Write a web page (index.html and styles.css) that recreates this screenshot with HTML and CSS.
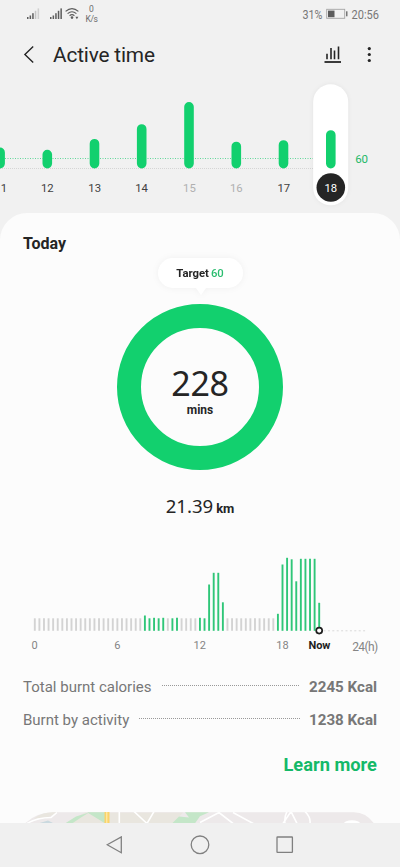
FILE: index.html
```html
<!DOCTYPE html>
<html lang="en">
<head>
<meta charset="utf-8">
<meta name="viewport" content="width=device-width, initial-scale=1">
<title>Active time</title>
<link rel="stylesheet" href="styles.css">
</head>
<body>
<div class="phone">
  <div class="status">
    <svg width="400" height="30" viewBox="0 0 400 30">
      <g fill="#5c5c5c">
        <rect x="27" y="17" width="1.5" height="2"/><rect x="29.6" y="15.5" width="1.5" height="3.5"/><rect x="32.2" y="13.2" width="1.5" height="5.8"/>
        <rect x="34.8" y="10.8" width="1.5" height="8.2" fill="#c4c4c4"/><rect x="37.6" y="8.4" width="1.5" height="10.6" fill="#d0d0d0"/>
        <rect x="50" y="17" width="1.5" height="2"/><rect x="52.6" y="15.5" width="1.5" height="3.5"/><rect x="55.2" y="13.2" width="1.5" height="5.8"/>
        <rect x="57.8" y="10.8" width="1.5" height="8.2"/><rect x="60.4" y="8.4" width="1.5" height="10.6"/>
        <circle cx="72" cy="17.6" r="1.3"/>
        <path d="M75.4 16.8h3l-1.5 2.4z"/>
      </g>
      <g fill="none" stroke="#5c5c5c" stroke-width="1.2">
        <path d="M65.6 11.4q6.4-5.4 12.8 0M67.6 13.6q4.4-3.7 8.8 0M69.6 15.7q2.4-2 4.8 0"/>
        <rect x="326.7" y="9.3" width="18" height="9" stroke="#a4a4a4" stroke-width=".9"/>
      </g>
      <rect x="328" y="10.6" width="6.5" height="6.6" fill="#5c5c5c"/>
      <rect x="346" y="11.3" width="1.5" height="5" fill="#777"/>
      <text class="rate" x="91.5" y="12.2" text-anchor="middle">0</text>
      <text class="rate" x="85.5" y="22.2" textLength="12.5">K/s</text>
      <text class="clock" x="302.5" y="18.6" textLength="20" lengthAdjust="spacingAndGlyphs">31%</text>
      <text class="clock" x="351.5" y="18.6" textLength="27.5" lengthAdjust="spacingAndGlyphs">20:56</text>
    </svg>
  </div>

  <header class="bar">
    <svg class="back" width="12" height="20" viewBox="0 0 12 20"><path d="M10.2 1.6 1.9 9.6l8.3 8" fill="none" stroke="#252525" stroke-width="1.4"/></svg>
    <h1>Active time</h1>
    <svg class="stats" width="18" height="20" viewBox="0 0 18 20"><path d="M3 8.8v5.4M7 3v11.2M10.5 5.4v8.8M14.5 1.5v12.7" stroke="#252525" stroke-width="1.6"/><path d="M.5 17h16.5" stroke="#252525" stroke-width="1.8"/></svg>
    <svg class="more" width="4" height="18" viewBox="0 0 4 18"><g fill="#252525"><circle cx="2.3" cy="2.6" r="1.6"/><circle cx="2.3" cy="8.5" r="1.6"/><circle cx="2.3" cy="14.5" r="1.6"/></g></svg>
  </header>

  <svg class="week" width="400" height="133" viewBox="0 80 400 133">
    <path d="M0 158.5h313" stroke="#62d69a" stroke-width="1" stroke-dasharray="1 1.5"/>
    <path d="M0 168.5h313" stroke="#d5d5d5" stroke-width="1" stroke-dasharray="1 1"/>
    <rect class="pill" x="313.2" y="84.3" width="35" height="121" rx="17.5" fill="#fff"/>
    <circle cx="330.8" cy="187.5" r="14.3" fill="#252525"/>
    <g stroke="#12d06e" stroke-width="9.6" stroke-linecap="round">
      <path d="M.1 152.4v11.2M47.3 154.6v9M94.5 143.7v19.9M141.7 129v34.6M189 106.8v56.8M236.3 146.5v17.1M283.5 145v18.6M330.8 135v28.6"/>
    </g>
    <g class="days">
      <text x=".8" y="191.8">11</text><text x="47.3" y="191.8">12</text><text x="94.7" y="191.8">13</text><text x="141.5" y="191.8">14</text>
      <text class="dim" x="189.4" y="191.8">15</text><text class="dim" x="236.3" y="191.8">16</text><text x="283.8" y="191.8">17</text><text class="sel" x="330.8" y="191.8">18</text>
      <text class="goal" x="361.6" y="162.9">60</text>
    </g>
  </svg>

  <main class="card">
    <h2>Today</h2>
    <div class="target"><b>Target</b><span>60</span></div>
    <div class="ring"><div class="mins">228</div><div class="unit">mins</div></div>
    <div class="distance"><span>21.39</span><b>km</b></div>
    <svg class="hours" width="400" height="115" viewBox="0 545 400 115">
      <g class="bars" id="bars"></g>
      <path d="M323.5 630.8h44" stroke="#d9d9d9" stroke-width="1" stroke-dasharray="2 2.4"/>
      <circle cx="319.2" cy="630.6" r="3" fill="#fff" stroke="#1e1e1e" stroke-width="1.7"/>
      <g class="axis">
        <text x="34.7" y="649">0</text><text x="117.3" y="649">6</text><text x="199.7" y="649">12</text><text x="282.4" y="649">18</text>
        <text class="now" x="319.4" y="649.2" textLength="22">Now</text><text class="end" x="365.2" y="650.8" textLength="26">24(h)</text>
      </g>
    </svg>
    <dl class="burn">
      <div class="row"><dt>Total burnt calories</dt><i></i><dd>2245 Kcal</dd></div>
      <div class="row"><dt>Burnt by activity</dt><i></i><dd>1238 Kcal</dd></div>
    </dl>
    <a class="learn">Learn more</a>
    <svg class="map" width="354" height="11" viewBox="23 811.5 354 11">
      <path d="M25 823q12-11.2 28-11.2h301q12 0 20 11.2z" fill="#ede9ea"/>
      <path d="M34 818q8-6.2 19-6.2h5L45 818zM65 823l20-11h98l-10 11z" fill="#e9e6df"/>
      <path d="M65 823l11-7 13-4-8 5-9 6zM87 811.8h20v11h-2zM172 823l7-7 10 1-4-5.2h24l-9 4-5 7z" fill="#c4e6c8"/>
      <path d="M38 823l10-3 6 3z" fill="#cad9df"/>
      <path d="M104.5 811.5h5v12h-5z" fill="#fbd36a"/><path d="M106.8 811.5v12" stroke="#fff0b8"/>
      <g fill="none" stroke="#fff" stroke-width="1.6">
        <path d="M27 823q10-6 24-6l6-5M119.3 811v12M134 811l13 12 7-12M200 822l19-10 14 11M233 812l22 12M283 823l8-12 6 12M287 811q-3 6-2 12M305 811q6 6 5 12"/>
      </g>
      <ellipse cx="352" cy="823" rx="8" ry="3.2" fill="#fff"/>
    </svg>
  </main>

  <nav class="nav">
    <svg width="18" height="18" viewBox="0 0 18 18"><path d="M1.2 8.8 15.3.9v15.8z"/></svg>
    <svg width="20" height="20" viewBox="0 0 20 20"><circle cx="10" cy="9.8" r="8.8"/></svg>
    <svg width="18" height="18" viewBox="0 0 18 18"><rect x="1" y="1" width="15.4" height="15.4" rx=".5"/></svg>
  </nav>
</div>
<script src="chart.js"></script>
</body>
</html>
```
FILE: styles.css
```css
* { box-sizing: border-box; margin: 0; padding: 0; }
body { background: #f1f1f1; font-family: Roboto, sans-serif; color: #252525; }
.phone { width: 400px; height: 867px; display: flex; flex-direction: column; overflow: hidden; background: #f1f1f1; }
svg { display: block; flex: none; }
svg text { font-family: Roboto, sans-serif; }
.status { height: 30px; flex: none; }
.rate { font-size: 8.5px; fill: #6b6b6b; }
.clock { font-size: 12.5px; fill: #777; }
.bar { height: 50px; flex: none; display: flex; align-items: center; padding-left: 23px; }
.back { margin-right: 18px; }
.bar h1 { font-size: 20.8px; letter-spacing: -.16px; font-weight: 400; line-height: 50px; width: 271px; white-space: nowrap; }
.stats { margin-right: 25px; }
.week { height: 133px; }
.pill { filter: drop-shadow(0 0 2px rgba(0, 0, 0, .06)); }
.days text { font-size: 11.3px; fill: #404040; text-anchor: middle; }
.days .dim { fill: #b0b0b0; }
.days .sel { fill: #fff; }
.days .goal { fill: #22b868; font-size: 11.5px; }
.card { flex: none; height: 610px; background: #fcfcfc; border-radius: 27px 27px 0 0; display: flex; flex-direction: column; align-items: center; overflow: hidden; }
.card h2 { align-self: flex-start; margin: 20px 0 0 23px; font-size: 16px; line-height: 22px; font-weight: 700; }
.target { position: relative; width: 85px; height: 30px; margin-top: 3px; border-radius: 15px; background: #fff; display: flex; justify-content: center; align-items: center; gap: 2px; font-size: 11.3px; filter: drop-shadow(0 0 3px rgba(0, 0, 0, .05)); }
.target::after { content: ""; position: absolute; top: 30px; left: 38px; border: 5px solid transparent; border-top: 7px solid #fff; border-bottom: 0; }
.target span { color: #2cbd70; font-weight: 500; }
.ring { width: 166px; height: 166px; margin-top: 16px; border: 24px solid #12d06e; border-radius: 50%; text-align: center; flex: none; }
.mins { font: 400 34px/40px "Noto Sans", sans-serif; margin-top: 35px; letter-spacing: -.3px; }
.unit { font-size: 12px; line-height: 14px; font-weight: 700; }
.distance { display: flex; align-items: baseline; gap: 3px; height: 28px; line-height: 28px; margin-top: 22px; }
.distance span { font: 400 18.6px/28px "Noto Sans", sans-serif; }
.distance b { font-size: 13px; }
.hours { margin-top: 25px; }
.bars line { stroke: #d3d3d3; stroke-width: 1.9; }
.bars .active { stroke: #2fc678; }
.axis text { font-size: 11px; fill: #858585; text-anchor: middle; }
.axis .now { fill: #1e1e1e; font-weight: 700; }
.axis .end { font-size: 12px; }
.burn { width: 354px; margin-top: 10px; }
.row { display: flex; align-items: center; height: 33px; color: #777; font-size: 15px; }
.row i { flex: 1; height: 1px; margin: -3px 9px 0 10px; background: repeating-linear-gradient(90deg, #999 0 1px, transparent 1px 2px); }
.row dd { font-weight: 700; font-size: 15.15px; }
.learn { align-self: flex-end; margin: 17px 23px 0 0; color: #14b968; font-size: 18.3px; line-height: 24px; font-weight: 700; }
.map { margin-top: auto; }
.nav { height: 44px; flex: none; display: flex; align-items: center; justify-content: center; gap: 66px; background: #f0f0f0; }
.nav svg { fill: none; stroke: #808080; stroke-width: 1.3; }
```
FILE: chart.js
```js
// Bar height for each 20-minute slot; idle slots keep the default height.
const active = {
  24: 15.3, 25: 12.5, 26: 13, 27: 12.5, 28: 13, 30: 12.5, 31: 13,
  36: 13, 37: 12.5, 38: 46.3, 39: 58, 40: 58, 41: 28.5,
  53: 17, 54: 66.3, 55: 73, 56: 71.5, 57: 49.5, 58: 72, 59: 72, 60: 72, 61: 72, 62: 28
};
const bars = document.getElementById('bars');
for (let i = 0; i <= 62; i++) {
  const line = document.createElementNS('http://www.w3.org/2000/svg', 'line');
  const x = 34.8 + i * 4.587;
  line.setAttribute('x1', x);
  line.setAttribute('x2', x);
  line.setAttribute('y1', 630.8);
  line.setAttribute('y2', 630.8 - (active[i] || 12.5));
  if (active[i]) line.setAttribute('class', 'active');
  bars.appendChild(line);
}
```
